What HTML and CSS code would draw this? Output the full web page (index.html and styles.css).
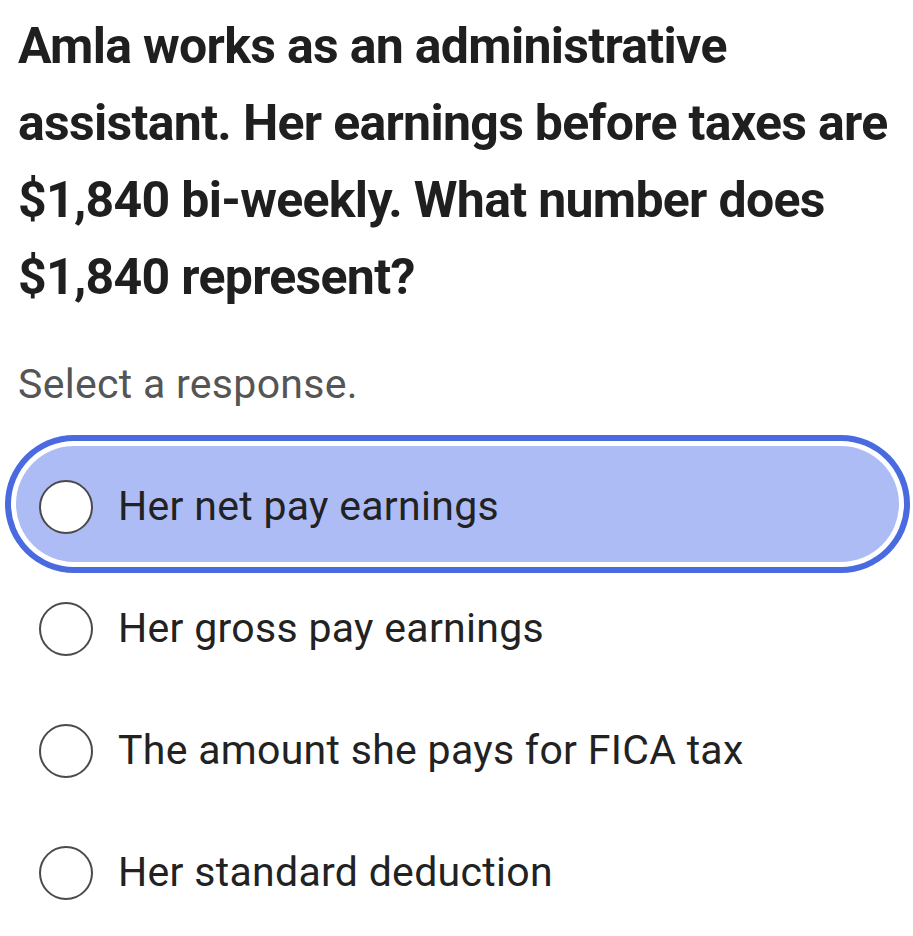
FILE: index.html
```html
<html>
<head>
    <meta charset="UTF-8">
    <title>Question</title>
    <link rel="stylesheet" href="styles.css">
</head>
<body>
    <h1 class="question">Amla works as an administrative assistant. Her earnings before taxes are $1,840 bi-weekly. What number does $1,840 represent?</h1>
    <p class="prompt">Select a response.</p>
    <div class="options">
        <label class="option selected">
            <span class="radio"></span>
            <span class="option-text">Her net pay earnings</span>
        </label>
        <label class="option">
            <span class="radio"></span>
            <span class="option-text">Her gross pay earnings</span>
        </label>
        <label class="option">
            <span class="radio"></span>
            <span class="option-text">The amount she pays for FICA tax</span>
        </label>
        <label class="option">
            <span class="radio"></span>
            <span class="option-text">Her standard deduction</span>
        </label>
    </div>
</body>
</html>
```

FILE: styles.css
```css
body {
    font-family: 'Roboto', 'Liberation Sans', sans-serif;
    background-color: #fff;
    color: #222;
    margin: 0;
    padding: 0;
}

.question {
    font-size: 50px;
    line-height: 77px;
    font-weight: bold;
    letter-spacing: -0.7px;
    color: #1f1f1f;
    margin: 8px 0 0;
    padding: 0 0 0 18px;
}

.prompt {
    font-size: 41px;
    line-height: 48px;
    letter-spacing: 0.3px;
    color: #555;
    margin: 44px 0 0;
    padding-left: 18px;
}

.options {
    margin: 38px 14px 0 16px;
    display: flex;
    flex-direction: column;
    gap: 6px;
}

.option {
    display: flex;
    align-items: center;
    height: 116px;
    padding-left: 23px;
    border-radius: 58px;
}

.option.selected {
    background-color: #aebcf5;
    box-shadow: 0 0 0 5px #fff, 0 0 0 11px #4a6ae0;
}

.radio {
    width: 50px;
    height: 50px;
    border: 2.5px solid #4a4a4a;
    border-radius: 50%;
    background: #fff;
    flex-shrink: 0;
    margin-top: 6px;
}

.option-text {
    margin-left: 25px;
    font-size: 41px;
    letter-spacing: 0.3px;
    color: #222;
    padding-top: 4px;
}
```
